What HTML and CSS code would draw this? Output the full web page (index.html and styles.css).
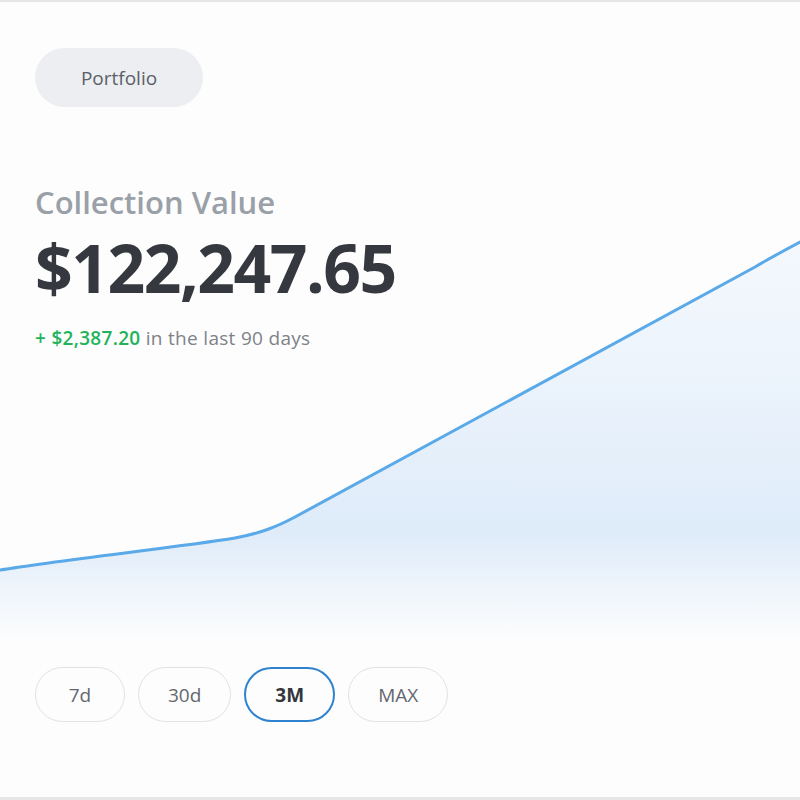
FILE: index.html
```html
<!DOCTYPE html>
<html lang="en">
<head>
  <meta charset="UTF-8">
  <meta name="viewport" content="width=device-width, initial-scale=1.0">
  <title>Portfolio - Collection Value</title>
  <link rel="stylesheet" href="styles.css">
</head>
<body>
  <div class="card">
    <svg class="chart" viewBox="0 0 800 800" preserveAspectRatio="none" aria-hidden="true">
      <defs>
        <linearGradient id="areaFill" x1="0" y1="0" x2="0" y2="1">
          <stop offset="0" stop-color="#eef5fd" stop-opacity="0.6"/>
          <stop offset="0.72" stop-color="#deebf9"/>
          <stop offset="1" stop-color="#fdfdfd"/>
        </linearGradient>
      </defs>
      <path class="area" d="M0,568 C60,558 180,545 235,536 C262,531 278,524 295,515 L755,265 C770,256 785,248 800,240 L800,640 L0,640 Z" fill="url(#areaFill)"/>
      <path class="line" d="M0,568 C60,558 180,545 235,536 C262,531 278,524 295,515 L755,265 C770,256 785,248 800,240"/>
    </svg>

    <header class="top">
      <span class="tag">Portfolio</span>
    </header>

    <section class="summary">
      <h2>Collection Value</h2>
      <h1>$122,247.65</h1>
      <p class="change"><span class="gain">+ $2,387.20</span> in the last 90 days</p>
    </section>

    <div class="ranges">
      <button>7d</button>
      <button>30d</button>
      <button class="active">3M</button>
      <button>MAX</button>
    </div>
  </div>
</body>
</html>
```

FILE: styles.css
```css
* {
  margin: 0;
  padding: 0;
  box-sizing: border-box;
}

body {
  font-family: "Open Sans", Arial, sans-serif;
  background: #fdfdfd;
  color: #35383e;
}

.card {
  position: relative;
  width: 800px;
  height: 800px;
  border-top: 2px solid #e6e6e6;
  border-bottom: 3px solid #e6e6e6;
  padding: 46px 35px 0;
  overflow: hidden;
}

.chart {
  position: absolute;
  top: 0;
  left: 0;
  width: 800px;
  height: 800px;
  z-index: 0;
}

.chart .line {
  fill: none;
  stroke: #5aa9e8;
  stroke-width: 3;
  stroke-linecap: round;
}

.top,
.summary,
.ranges {
  position: relative;
  z-index: 1;
}

.tag {
  display: inline-flex;
  align-items: center;
  justify-content: center;
  width: 168px;
  height: 59px;
  border-radius: 30px;
  background: #eceef1;
  color: #5b6068;
  font-size: 19px;
}

.summary {
  margin-top: 75px;
}

.summary h2 {
  font-size: 31px;
  font-weight: 600;
  color: #9aa0a7;
  line-height: 40px;
}

.summary h1 {
  margin-top: 5px;
  font-size: 66px;
  font-weight: 700;
  color: #35383e;
  letter-spacing: -1.5px;
  line-height: 80px;
}

.change {
  margin-top: 18px;
  font-size: 19px;
  letter-spacing: 0.3px;
  color: #7d8289;
}

.gain {
  color: #22b35a;
  font-weight: 600;
}

.ranges {
  display: flex;
  gap: 13px;
  margin-top: 316px;
}

.ranges button {
  height: 55px;
  min-width: 90px;
  padding: 0 29px;
  border: 1.5px solid #e2e2e2;
  border-radius: 28px;
  background: #fdfdfd;
  font-family: inherit;
  font-size: 19px;
  color: #63676d;
}

.ranges button.active {
  border: 2px solid #2f82cf;
  color: #33373d;
  font-weight: 700;
}
```
